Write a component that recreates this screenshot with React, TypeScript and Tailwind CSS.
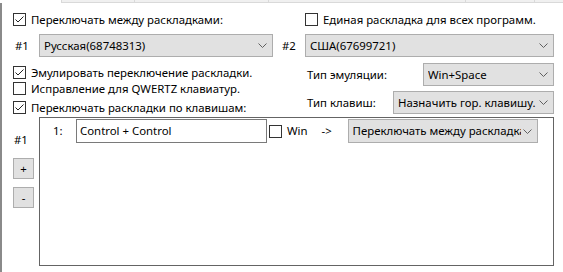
import { ReactNode } from "react";

const Check = ({ checked, label }: { checked?: boolean; label?: string }) => (
  <div className="flex items-center gap-[5px]">
    <div className="w-[13px] h-[13px] shrink-0 border border-[#333333] bg-white flex items-center justify-center">
      {checked && (
        <svg width="11" height="11" viewBox="0 0 11 11">
          <polyline points="1.5,5.5 4,8 9.5,2.5" fill="none" stroke="#222" strokeWidth="1" />
        </svg>
      )}
    </div>
    {label && <span className="leading-none whitespace-nowrap">{label}</span>}
  </div>
);

const Chevron = () => (
  <svg width="9" height="5" viewBox="0 0 9 5" className="shrink-0">
    <polyline points="0.5,0.5 4.5,4.5 8.5,0.5" fill="none" stroke="#606060" strokeWidth="1" />
  </svg>
);

const Select = ({ value, className }: { value: string; className: string }) => (
  <div
    className={`h-[23px] shrink-0 bg-[#e1e1e1] border border-[#adadad] flex items-center pl-[4px] pr-[5px] gap-[2px] ${className}`}
  >
    <span className="flex-1 overflow-hidden whitespace-nowrap">{value}</span>
    <Chevron />
  </div>
);

const SmallButton = ({ children }: { children: ReactNode }) => (
  <div className="w-[21px] h-[21px] bg-[#e1e1e1] border border-[#adadad] flex items-center justify-center leading-none">
    {children}
  </div>
);

export default function App() {
  return (
    <div
      className="w-[563px] h-[272px] bg-white text-black text-[11.4px] overflow-hidden"
      style={{ fontFamily: '"Noto Sans", "Segoe UI", sans-serif' }}
    >
      {/* tab strip */}
      <div className="flex h-[3px]">
        <div className="w-[62px] bg-white border-r border-[#d9d9d9]" />
        <div className="w-[73px] bg-[#f0f0f0] border-r border-b border-[#d9d9d9]" />
        <div className="w-[134px] bg-[#f0f0f0] border-r border-b border-[#d9d9d9]" />
        <div className="w-[197px] bg-[#f0f0f0] border-r border-b border-[#d9d9d9]" />
        <div className="w-[69px] bg-[#f0f0f0] border-r border-b border-[#d9d9d9]" />
        <div className="flex-1 bg-[#f0f0f0] border-b border-[#d9d9d9]" />
      </div>

      <div className="border-l-2 border-[#8a8a8a] h-[269px]">
        {/* top settings */}
        <div className="flex">
          <div className="w-[280px] shrink-0 pl-[11px] flex flex-col">
            <div className="mt-[10px]">
              <Check checked label="Переключать между раскладками:" />
            </div>
            <div className="mt-[8px] flex items-center">
              <span className="w-[26px] shrink-0 pl-[2px]">#1</span>
              <Select value="Русская(68748313)" className="w-[234px]" />
            </div>
            <div className="mt-[9px]">
              <Check checked label="Эмулировать переключение раскладки." />
            </div>
            <div className="mt-[3px]">
              <Check label="Исправление для QWERTZ клавиатур." />
            </div>
            <div className="mt-[6px]">
              <Check checked label="Переключать раскладки по клавишам:" />
            </div>
          </div>

          <div className="flex-1 flex flex-col">
            <div className="mt-[10px] pl-[23px]">
              <Check label="Единая раскладка для всех программ." />
            </div>
            <div className="mt-[8px] flex items-center">
              <span className="w-[23px] shrink-0">#2</span>
              <Select value="США(67699721)" className="w-[249px]" />
            </div>
            <div className="mt-[6px] flex items-center">
              <span className="pl-[25px] w-[141px] shrink-0">Тип эмуляции:</span>
              <Select value="Win+Space" className="w-[131px]" />
            </div>
            <div className="mt-[5px] flex items-center">
              <span className="pl-[25px] w-[111px] shrink-0">Тип клавиш:</span>
              <Select value="Назначить гор. клавишу." className="w-[161px]" />
            </div>
          </div>
        </div>

        {/* hotkeys list */}
        <div className="flex mt-[3px]">
          <div className="w-[37px] shrink-0 pl-[11px] flex flex-col">
            <span className="mt-[17px] pl-[1px] leading-none">#1</span>
            <div className="mt-[13px]">
              <SmallButton>+</SmallButton>
            </div>
            <div className="mt-[8px]">
              <SmallButton>-</SmallButton>
            </div>
          </div>
          <div className="w-[515px] h-[149px] shrink-0 border border-[#646464] bg-white">
            <div className="flex items-center mt-[1px]">
              <span className="w-[36px] shrink-0 pl-[13px]">1:</span>
              <div className="w-[191px] h-[24px] shrink-0 border border-[#7a7a7a] flex items-center pl-[3px]">
                Control + Control
              </div>
              <div className="ml-[2px]">
                <Check label="Win" />
              </div>
              <span className="ml-[14px] w-[26px] shrink-0">-&gt;</span>
              <Select value="Переключать между раскладками" className="w-[190px] h-[24px]" />
            </div>
          </div>
        </div>
      </div>
    </div>
  );
}
